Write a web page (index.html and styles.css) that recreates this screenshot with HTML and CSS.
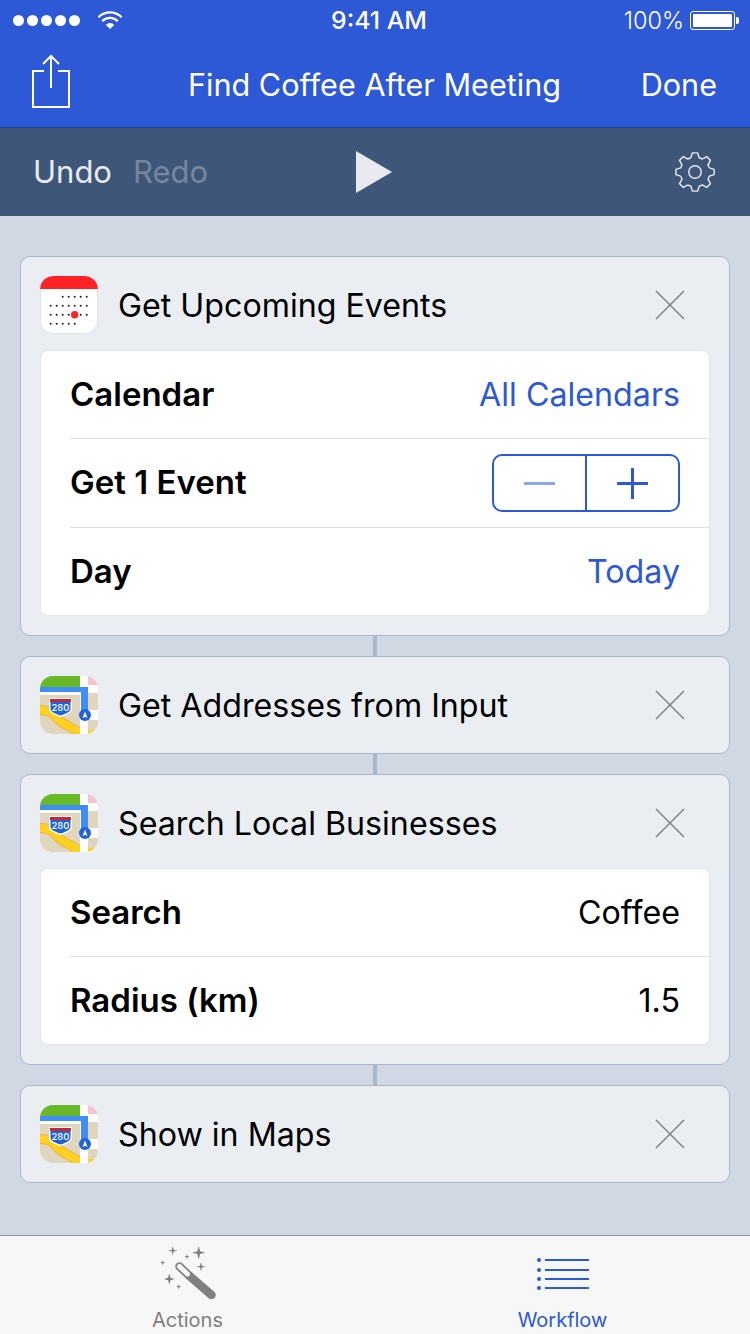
FILE: index.html
```html
<!DOCTYPE html>
<html lang="en">
<head>
    <meta charset="UTF-8">
    <meta name="viewport" content="width=device-width, initial-scale=1.0">
    <title>Find Coffee After Meeting</title>
    <link rel="stylesheet" href="styles.css">
</head>
<body>
    <svg class="defs" width="0" height="0">
        <symbol id="maps" viewBox="0 0 58 58">
            <rect width="58" height="58" fill="#dfd6bd"/>
            <rect width="40" height="11" fill="#68b828"/>
            <rect x="48" width="10" height="9" fill="#f6c3cf"/>
            <path d="M0 34c10 0 14 4 18 9 6 7 14 7 22 15" fill="none" stroke="#eeb04a" stroke-width="10"/>
            <path d="M0 34c10 0 14 4 18 9 6 7 14 7 22 15" fill="none" stroke="#ffd21f" stroke-width="8"/>
            <path d="M40 0h8v58h-8z" fill="#fff"/>
            <path d="M48 9h10v8H48zM48 34h10v10H48zM0 16h40v3H0z" fill="#fff"/>
            <path d="M48 54h10v4H48z" fill="#ffd21f"/>
            <path d="M0 11h48v5H0zM41 11h7v29h-7z" fill="#3f8ef5"/>
            <path d="M9 22h23v11c0 4-6 6-11.500 8C15 39 9 37 9 33z" fill="#fff"/>
            <path d="M10.500 26h20v7c0 3-5 5-10 6.500-5-1.500-10-3.500-10-6.500z" fill="#1f63d8"/>
            <rect x="10" y="23" width="21" height="3" fill="#c9272f"/>
            <circle cx="45" cy="39" r="6" fill="#1f63d8"/>
            <path d="M45 35.500l2.500 6.500-2.500-1.300-2.500 1.300z" fill="#fff"/>
        </symbol>
        <symbol id="close" viewBox="0 0 32 32">
            <path d="M2 2l28 28M30 2L2 30" fill="none" stroke="#7e8388" stroke-width="1.500"/>
        </symbol>
    </svg>

    <header class="top-bar">
        <div class="status-bar">
            <div class="status-left">
                <div class="signal"><i></i><i></i><i></i><i></i><i></i></div>
                <svg class="wifi" width="24" height="18" viewBox="0 0 24 18">
                    <path d="M.3 6.300a16.500 16.500 0 0 1 23.400 0M4.200 10.200a11 11 0 0 1 15.600 0" fill="none" stroke="#fff" stroke-width="2.300"/>
                    <path d="M12 18L7.760 13.760a6 6 0 0 1 8.480 0z" fill="#fff"/>
                </svg>
            </div>
            <div class="status-time">9:41 AM</div>
            <div class="status-right">
                <span>100%</span>
                <div class="battery"><div class="battery-fill"></div></div>
                <div class="battery-tip"></div>
            </div>
        </div>
        <nav class="nav-bar">
            <svg class="share-icon" width="40" height="54" viewBox="0 0 40 54">
                <path d="M12 17H1v36h36V17H26" fill="none" stroke="#fff" stroke-width="2"/>
                <path d="M19 2v32M11 10l8-8 8 8" fill="none" stroke="#fff" stroke-width="2"/>
            </svg>
            <div class="nav-title">Find Coffee After Meeting</div>
            <div class="nav-done">Done</div>
        </nav>
    </header>

    <div class="toolbar">
        <div class="history">
            <span class="undo">Undo</span>
            <span class="redo">Redo</span>
        </div>
        <div class="play"></div>
        <svg class="gear" width="44" height="44" viewBox="-23 -23 46 46" fill="none" stroke="#e8eaef" stroke-width="1.500" stroke-linejoin="round">
            <circle r="6.500"/>
            <g>
                <path d="M-4.270-14.900L-2.800-20H2.800L4.270-14.900A15.500 15.500 0 0 1 7.510-13.560"/>
                <path transform="rotate(45)" d="M-4.270-14.900L-2.800-20H2.800L4.270-14.900A15.500 15.500 0 0 1 7.510-13.560"/>
                <path transform="rotate(90)" d="M-4.270-14.900L-2.800-20H2.800L4.270-14.900A15.500 15.500 0 0 1 7.510-13.560"/>
                <path transform="rotate(135)" d="M-4.270-14.900L-2.800-20H2.800L4.270-14.900A15.500 15.500 0 0 1 7.510-13.560"/>
                <path transform="rotate(180)" d="M-4.270-14.900L-2.800-20H2.800L4.270-14.900A15.500 15.500 0 0 1 7.510-13.560"/>
                <path transform="rotate(225)" d="M-4.270-14.900L-2.800-20H2.800L4.270-14.900A15.500 15.500 0 0 1 7.510-13.560"/>
                <path transform="rotate(270)" d="M-4.270-14.900L-2.800-20H2.800L4.270-14.900A15.500 15.500 0 0 1 7.510-13.560"/>
                <path transform="rotate(315)" d="M-4.270-14.900L-2.800-20H2.800L4.270-14.900A15.500 15.500 0 0 1 7.510-13.560"/>
            </g>
        </svg>
    </div>

    <main class="workflow">
        <section class="card">
            <div class="card-header">
                <svg class="app-icon" viewBox="0 0 58 58">
                    <rect x=".5" y=".5" width="57" height="57" rx="12.500" fill="#fff" stroke="#dfe2e6"/>
                    <path d="M0 13V13A13 13 0 0 1 13 0H45A13 13 0 0 1 58 13z" fill="#ff2326"/>
                    <g fill="#1a1a1a">
                        <circle cx="22.700" cy="20.700" r="1"/><circle cx="28.700" cy="20.700" r="1"/><circle cx="34.700" cy="20.700" r="1"/><circle cx="40.700" cy="20.700" r="1"/><circle cx="46.700" cy="20.700" r="1"/>
                        <circle cx="10.700" cy="29.700" r="1"/><circle cx="16.700" cy="29.700" r="1"/><circle cx="22.700" cy="29.700" r="1"/><circle cx="28.700" cy="29.700" r="1"/><circle cx="34.700" cy="29.700" r="1"/><circle cx="40.700" cy="29.700" r="1"/><circle cx="46.700" cy="29.700" r="1"/>
                        <circle cx="10.700" cy="38.700" r="1"/><circle cx="16.700" cy="38.700" r="1"/><circle cx="22.700" cy="38.700" r="1"/><circle cx="28.700" cy="38.700" r="1"/><circle cx="40.700" cy="38.700" r="1"/><circle cx="46.700" cy="38.700" r="1"/>
                        <circle cx="10.700" cy="47.700" r="1"/><circle cx="16.700" cy="47.700" r="1"/><circle cx="22.700" cy="47.700" r="1"/><circle cx="28.700" cy="47.700" r="1"/><circle cx="34.700" cy="47.700" r="1"/>
                    </g>
                    <circle cx="34.700" cy="38.700" r="3.700" fill="#ff2326"/>
                </svg>
                <div class="card-title">Get Upcoming Events</div>
                <svg class="close-icon"><use href="#close"/></svg>
            </div>
            <div class="params">
                <div class="param">
                    <div class="param-label">Calendar</div>
                    <div class="param-value link">All Calendars</div>
                </div>
                <div class="param param-stepper">
                    <div class="param-label">Get 1 Event</div>
                    <div class="stepper">
                        <div class="step"><div class="minus"></div></div>
                        <div class="step"><div class="plus"></div></div>
                    </div>
                </div>
                <div class="param">
                    <div class="param-label">Day</div>
                    <div class="param-value link">Today</div>
                </div>
            </div>
        </section>
        <div class="connector"></div>
        <section class="card">
            <div class="card-header">
                <svg class="app-icon" viewBox="0 0 58 58"><use href="#maps" width="58" height="58"/><text x="20.500" y="35" class="shield">280</text></svg>
                <div class="card-title">Get Addresses from Input</div>
                <svg class="close-icon"><use href="#close"/></svg>
            </div>
        </section>
        <div class="connector"></div>
        <section class="card">
            <div class="card-header">
                <svg class="app-icon" viewBox="0 0 58 58"><use href="#maps" width="58" height="58"/><text x="20.500" y="35" class="shield">280</text></svg>
                <div class="card-title">Search Local Businesses</div>
                <svg class="close-icon"><use href="#close"/></svg>
            </div>
            <div class="params">
                <div class="param">
                    <div class="param-label">Search</div>
                    <div class="param-value">Coffee</div>
                </div>
                <div class="param">
                    <div class="param-label">Radius (km)</div>
                    <div class="param-value">1.5</div>
                </div>
            </div>
        </section>
        <div class="connector"></div>
        <section class="card">
            <div class="card-header">
                <svg class="app-icon" viewBox="0 0 58 58"><use href="#maps" width="58" height="58"/><text x="20.500" y="35" class="shield">280</text></svg>
                <div class="card-title">Show in Maps</div>
                <svg class="close-icon"><use href="#close"/></svg>
            </div>
        </section>
    </main>

    <footer class="tab-bar">
        <div class="tab">
            <svg class="tab-icon" width="64" height="60" viewBox="155 1244 64 60" fill="#808080">
                <path d="M171.700 1246l.9 3.800 3.800.9-3.800.9-.9 3.800-.9-3.800-3.800-.9 3.800-.9z"/>
                <path d="M197.700 1246l1.400 5.300 5.300 1.400-5.300 1.400-1.400 5.300-1.400-5.300-5.300-1.400 5.300-1.400z"/>
                <path d="M186 1254l.6 2.100 2.100.6-2.100.6-.6 2.100-.6-2.100-2.100-.6 2.100-.6z"/>
                <path d="M161.700 1260l.6 2.100 2.100.6-2.100.6-.6 2.100-.6-2.100-2.100-.6 2.100-.6z"/>
                <path d="M200 1262l.9 3.800 3.800.9-3.800.9-.9 3.800-.9-3.800-3.800-.9 3.800-.9z"/>
                <path d="M168.300 1273.500l1.200 4.300 4.300 1.200-4.300 1.200-1.200 4.300-1.200-4.300-4.300-1.200 4.300-1.200z"/>
                <path d="M177.700 1284l.6 2.100 2.100.6-2.100.6-.6 2.100-.6-2.100-2.100-.6 2.100-.6z"/>
                <path d="M188 1275.500l22.500 19.500" fill="none" stroke="#808080" stroke-width="8.500" stroke-linecap="round"/>
                <path d="M178.500 1266.500l8.500 8" fill="none" stroke="#808080" stroke-width="8.500" stroke-linecap="round"/>
                <path d="M178.500 1266.500l8 7.500" fill="none" stroke="#f7f7f7" stroke-width="5" stroke-linecap="round"/>
            </svg>
            <div class="tab-label">Actions</div>
        </div>
        <div class="tab tab-active">
            <svg class="tab-icon" width="64" height="60" viewBox="531 1244 64 60" fill="#2d58d6">
                <circle cx="539" cy="1260" r="2"/><circle cx="539" cy="1270" r="2"/><circle cx="539" cy="1279" r="2"/><circle cx="539" cy="1288" r="2"/>
                <rect x="545" y="1259" width="44" height="2"/><rect x="545" y="1269" width="44" height="2"/><rect x="545" y="1278" width="44" height="2"/><rect x="545" y="1287" width="44" height="2"/>
            </svg>
            <div class="tab-label">Workflow</div>
        </div>
    </footer>
</body>
</html>
```

FILE: styles.css
```css
body {
    font-family: "Inter", "Liberation Sans", sans-serif;
    background-color: #d0d8e3;
    color: #000;
    margin: 0;
    width: 750px;
    height: 1334px;
    display: flex;
    flex-direction: column;
    overflow: hidden;
}

.defs {
    position: absolute;
}

.shield {
    font-family: "Inter", sans-serif;
    font-size: 9.5px;
    font-weight: 500;
    fill: #fff;
    text-anchor: middle;
}

.top-bar {
    background-color: #2d58d6;
    color: white;
    border-bottom: 1px solid #23408f;
}

.status-bar {
    height: 40px;
    padding: 0 11px 0 13px;
    display: grid;
    grid-template-columns: 1fr auto 1fr;
    align-items: center;
    font-size: 24.8px;
}

.status-left {
    display: flex;
    align-items: center;
}

.signal {
    display: flex;
    gap: 3px;
}

.signal i {
    width: 11px;
    height: 11px;
    border-radius: 50%;
    background-color: white;
}

.wifi {
    margin-left: 18px;
}

.status-time {
    font-weight: 500;
    padding-left: 6px;
}

.status-right {
    display: flex;
    align-items: center;
    justify-content: flex-end;
    font-size: 23.5px;
    font-weight: 300;
}

.battery {
    width: 45px;
    height: 19px;
    box-sizing: border-box;
    margin-left: 6px;
    padding: 2px;
    border: 1px solid white;
    border-radius: 3px;
}

.battery-fill {
    height: 100%;
    background-color: white;
    border-radius: 1px;
}

.battery-tip {
    width: 3px;
    height: 7px;
    margin-left: 1px;
    background-color: white;
    border-radius: 0 2px 2px 0;
}

.nav-bar {
    height: 87px;
    padding: 0 33px 0 32px;
    display: grid;
    grid-template-columns: 1fr auto 1fr;
    align-items: center;
    font-size: 30.6px;
}

.nav-title,
.nav-done {
    padding-top: 2px;
}

.share-icon {
    margin-top: -5px;
}

.nav-done {
    justify-self: end;
}

.toolbar {
    height: 88px;
    padding: 0 33px;
    display: grid;
    grid-template-columns: 1fr auto 1fr;
    align-items: center;
    background-color: #3e5678;
    font-size: 31px;
}

.history {
    display: flex;
    gap: 21px;
    padding-bottom: 2px;
}

.undo {
    color: #e8eaef;
}

.redo {
    color: #76869f;
}

.play {
    width: 0;
    height: 0;
    margin-left: -2px;
    border-style: solid;
    border-width: 21px 0 21px 36px;
    border-color: transparent transparent transparent #e8eaef;
}

.gear {
    justify-self: end;
}

.workflow {
    flex: 1;
    padding: 40px 20px 0;
}

.card {
    background-color: #eaeef3;
    border: 1px solid #a9b8c9;
    border-radius: 10px;
}

.card-header {
    height: 58px;
    padding: 19px 0 19px 19px;
    display: flex;
    align-items: center;
}

.app-icon {
    width: 58px;
    height: 58px;
    flex-shrink: 0;
    border-radius: 13px;
}

.card-title {
    flex: 1;
    margin-left: 20px;
    font-size: 32.2px;
}

.close-icon {
    width: 32px;
    height: 32px;
    margin-right: 43px;
}

.params {
    margin: -3px 19px 19px;
    background-color: white;
    border: 1px solid #e2e5ea;
    border-radius: 8px;
}

.param {
    height: 87px;
    margin-left: 29px;
    padding-right: 29px;
    display: flex;
    align-items: center;
    justify-content: space-between;
    border-bottom: 1px solid #dcdee2;
    font-size: 32.2px;
}

.param-stepper {
    height: 88px;
}

.param:last-child {
    border-bottom: none;
}

.param-label {
    padding-bottom: 2px;
    font-weight: 600;
    font-size: 33px;
}

.link {
    color: #2d58d6;
}

.stepper {
    width: 188px;
    height: 58px;
    box-sizing: border-box;
    display: flex;
    border: 2px solid #2d58d6;
    border-radius: 10px;
}

.step {
    flex: 1;
    display: flex;
    align-items: center;
    justify-content: center;
}

.step + .step {
    border-left: 2px solid #2d58d6;
}

.minus {
    width: 31px;
    height: 3px;
    background-color: #8ba6ec;
}

.plus {
    width: 31px;
    height: 31px;
    background:
        linear-gradient(#2d58d6, #2d58d6) center / 31px 3px no-repeat,
        linear-gradient(#2d58d6, #2d58d6) center / 3px 31px no-repeat;
}

.connector {
    width: 4px;
    height: 20px;
    margin: 0 auto;
    background-color: #a9b8c9;
}

.tab-bar {
    height: 98px;
    display: flex;
    background-color: #f7f7f7;
    border-top: 1px solid #8d8f94;
}

.tab {
    flex: 1;
    display: flex;
    flex-direction: column;
    align-items: center;
    padding-top: 8px;
    color: #808080;
    font-size: 20px;
}

.tab-icon {
    display: block;
}

.tab-label {
    margin-top: 4px;
    line-height: 24px;
}

.tab-active {
    color: #2d58d6;
}
```
